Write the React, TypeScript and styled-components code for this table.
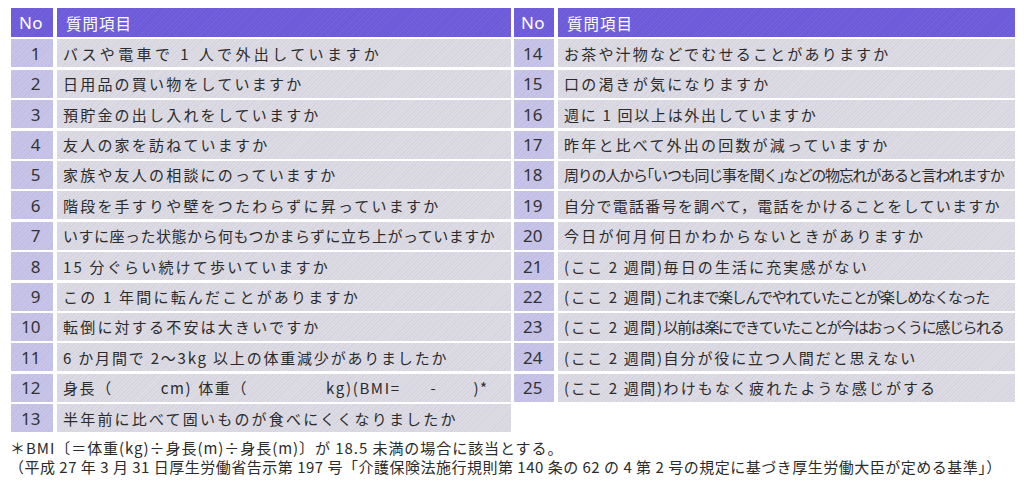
import React from "react";
import styled, { createGlobalStyle } from "styled-components";

const GlobalStyle = createGlobalStyle`
  html, body { margin: 0; padding: 0; background: #ffffff; }
  body { font-family: "Noto Sans CJK JP", "Noto Sans", sans-serif; color: #2b2b2b; }
`;

const hatch = (base: string, line: string) => `
  background-color: ${base};
  background-image: repeating-linear-gradient(
    135deg,
    ${line} 0px,
    ${line} 1px,
    transparent 1px,
    transparent 2.5px
  );
`;

const Page = styled.div`
  width: 1024px;
  height: 486px;
  box-sizing: border-box;
  padding: 8px 9px 0 11px;
  display: flex;
  flex-direction: column;
  overflow: hidden;
`;

const Tables = styled.div`
  display: flex;
  gap: 3px;
  align-items: flex-start;
`;

const Table = styled.div<{ $no: number; $w: number }>`
  width: ${(p) => p.$w}px;
  display: grid;
  grid-template-columns: ${(p) => p.$no}px 1fr;
  grid-auto-rows: 28px;
  grid-template-rows: 29px;
  column-gap: 4px;
  row-gap: 2.4px;
`;

const HeadCell = styled.div<{ $center?: boolean }>`
  ${hatch("#6c5ad8", "rgba(140,130,230,0.22)")}
  color: #ffffff;
  display: flex;
  align-items: center;
  justify-content: ${(p) => (p.$center ? "center" : "flex-start")};
  padding: ${(p) => (p.$center ? "0 2px 0 0" : "0 0 0 9px")};
  font-size: ${(p) => (p.$center ? "17px" : "15.5px")};
  font-family: ${(p) =>
    p.$center ? `"Noto Sans", sans-serif` : `"Noto Sans CJK JP", sans-serif`};
  letter-spacing: ${(p) => (p.$center ? "0.5px" : "1px")};
`;

const NoCell = styled.div`
  ${hatch("#c8c5e9", "rgba(170,166,214,0.25)")}
  display: flex;
  align-items: center;
  justify-content: center;
  padding-right: 3px;
  font-family: "Noto Sans", sans-serif;
  font-size: 17px;
  color: #333333;
`;

const Num = styled.span`
  display: inline-block;
  width: 20px;
  text-align: right;
`;

const QCell = styled.div<{ $ls: number }>`
  ${hatch("#dddce5", "rgba(190,189,202,0.25)")}
  display: flex;
  align-items: center;
  padding-left: 6px;
  white-space: nowrap;
  overflow: hidden;
  font-size: 15px;
  letter-spacing: ${(p) => p.$ls}px;
  color: #2b2b2b;
`;

const Prefix = styled.span`
  letter-spacing: 1.6px;
`;

const Blank = styled.span<{ $w: number }>`
  display: inline-block;
  width: ${(p) => p.$w}px;
`;

const Notes = styled.div`
  margin-top: 6px;
  margin-left: -2px;
  font-size: 15px;
  line-height: 19px;
  color: #2b2b2b;
`;

const NoteLine = styled.div<{ $ls: number; $indent: number }>`
  white-space: nowrap;
  letter-spacing: ${(p) => p.$ls}px;
  padding-left: ${(p) => p.$indent}px;
`;

type Q = { no: number; text: React.ReactNode; ls?: number };

const left: Q[] = [
  { no: 1, text: "バスや電車で 1 人で外出していますか", ls: 3.4 },
  { no: 2, text: "日用品の買い物をしていますか" },
  { no: 3, text: "預貯金の出し入れをしていますか" },
  { no: 4, text: "友人の家を訪ねていますか" },
  { no: 5, text: "家族や友人の相談にのっていますか" },
  { no: 6, text: "階段を手すりや壁をつたわらずに昇っていますか" },
  { no: 7, text: "いすに座った状態から何もつかまらずに立ち上がっていますか", ls: 0.5 },
  { no: 8, text: "15 分ぐらい続けて歩いていますか" },
  { no: 9, text: "この 1 年間に転んだことがありますか" },
  { no: 10, text: "転倒に対する不安は大きいですか" },
  { no: 11, text: "6 か月間で 2～3kg 以上の体重減少がありましたか", ls: 1.8 },
  {
    no: 12,
    text: (
      <>
        身長（<Blank $w={48} />cm)<Blank $w={6} />体重（<Blank $w={78} />kg)(BMI=
        <Blank $w={30} />-<Blank $w={36} />)*
      </>
    ),
    ls: 1.6,
  },
  { no: 13, text: "半年前に比べて固いものが食べにくくなりましたか" },
];

const right: Q[] = [
  { no: 14, text: "お茶や汁物などでむせることがありますか" },
  { no: 15, text: "口の渇きが気になりますか" },
  { no: 16, text: "週に 1 回以上は外出していますか", ls: 1.7 },
  { no: 17, text: "昨年と比べて外出の回数が減っていますか" },
  { no: 18, text: "周りの人から｢いつも同じ事を聞く｣などの物忘れがあると言われますか", ls: -1.2 },
  { no: 19, text: "自分で電話番号を調べて，電話をかけることをしていますか", ls: 1.25 },
  { no: 20, text: "今日が何月何日かわからないときがありますか" },
  { no: 21, text: <><Prefix>(ここ 2 週間)</Prefix>毎日の生活に充実感がない</>, ls: 2.1 },
  { no: 22, text: <><Prefix>(ここ 2 週間)</Prefix>これまで楽しんでやれていたことが楽しめなくなった</>, ls: -1.4 },
  { no: 23, text: <><Prefix>(ここ 2 週間)</Prefix>以前は楽にできていたことが今はおっくうに感じられる</>, ls: -1.4 },
  { no: 24, text: <><Prefix>(ここ 2 週間)</Prefix>自分が役に立つ人間だと思えない</>, ls: 1.9 },
  { no: 25, text: <><Prefix>(ここ 2 週間)</Prefix>わけもなく疲れたような感じがする</>, ls: 2.1 },
];

const QuestionTable: React.FC<{ rows: Q[]; no: number; w: number }> = ({ rows, no, w }) => (
  <Table $no={no} $w={w}>
    <HeadCell $center>No</HeadCell>
    <HeadCell>質問項目</HeadCell>
    {rows.map((r) => (
      <React.Fragment key={r.no}>
        <NoCell>
          <Num>{r.no}</Num>
        </NoCell>
        <QCell $ls={r.ls ?? 2.2}>{r.text}</QCell>
      </React.Fragment>
    ))}
  </Table>
);

export default function App() {
  return (
    <>
      <GlobalStyle />
      <Page>
        <Tables>
          <QuestionTable rows={left} no={42} w={500} />
          <QuestionTable rows={right} no={40} w={501} />
        </Tables>
        <Notes>
          <NoteLine $ls={0.95} $indent={1}>
            ＊BMI〔＝体重(kg)÷身長(m)÷身長(m)〕が 18.5 未満の場合に該当とする。
          </NoteLine>
          <NoteLine $ls={0.5} $indent={0}>
            （平成 27 年 3 月 31 日厚生労働省告示第 197 号「介護保険法施行規則第 140 条の 62 の 4 第 2 号の規定に基づき厚生労働大臣が定める基準」）
          </NoteLine>
        </Notes>
      </Page>
    </>
  );
}
